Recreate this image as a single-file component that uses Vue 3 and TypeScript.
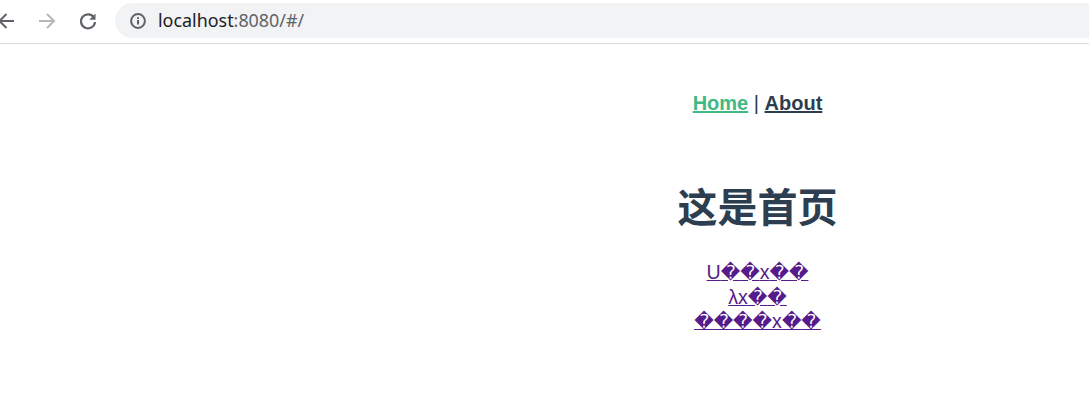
<script setup lang="ts">
const links: string[][] = [
  ['U', '�', '�', 'x', '�', '�'],
  ['λ', 'x', '�', '�'],
  ['�', '�', '�', '�', 'x', '�', '�'],
]
</script>

<template>
  <div class="page">
    <header class="toolbar">
      <button class="nav-btn back" aria-label="Back">
        <svg width="20" height="20" viewBox="0 0 20 20"><path d="M16 10H1.5M8.5 3 1.5 10l7 7" fill="none" stroke="#5f6368" stroke-width="2"/></svg>
      </button>
      <button class="nav-btn forward" aria-label="Forward">
        <svg width="20" height="20" viewBox="0 0 20 20"><path d="M2 10h15M10 3l7 7-7 7" fill="none" stroke="#b5b7ba" stroke-width="2"/></svg>
      </button>
      <button class="nav-btn reload" aria-label="Reload">
        <svg width="20" height="20" viewBox="0 0 20 20"><path d="M16.2 7A7 7 0 1 0 17 11" fill="none" stroke="#5f6368" stroke-width="2.2"/><path d="M17.5 2.5v6.2h-6.2z" fill="#5f6368"/></svg>
      </button>
      <div class="omnibox">
        <svg class="info" width="16" height="16" viewBox="0 0 16 16"><circle cx="8" cy="8" r="6.9" fill="none" stroke="#5f6368" stroke-width="2"/><path d="M8 7v4.6M8 4.2v1.7" stroke="#5f6368" stroke-width="2"/></svg>
        <span class="url"><span class="host">localhost</span>:8080/#/</span>
      </div>
    </header>
    <main class="content">
      <nav class="nav"><a class="active" href="#/">Home</a> | <a href="#/about">About</a></nav>
      <h1>这是首页</h1>
      <ul class="links">
        <li v-for="(link, i) in links" :key="i"><a href="#/"><span v-for="(ch, j) in link" :key="j" :class="{ bad: ch === '�' }">{{ ch }}</span></a></li>
      </ul>
    </main>
  </div>
</template>

<style>
html, body { overflow: hidden; background: #fff; }
</style>

<style scoped>
.page { width: 1089px; height: 407px; overflow: hidden; background: #fff; }
.toolbar {
  box-sizing: border-box;
  height: 44px;
  display: flex;
  align-items: flex-start;
  border-bottom: 1px solid #dadce0;
  padding: 3px 0 0;
}
.nav-btn {
  width: 20px; height: 20px; padding: 0; margin-top: 8px;
  border: 0; background: none; display: block; flex: none;
}
.back { margin-left: -2px; }
.forward { margin-left: 19px; }
.reload { margin-left: 21px; }
.omnibox {
  flex: none;
  width: 1000px;
  height: 35px;
  margin-left: 17px;
  border-radius: 18px;
  background: #f1f3f4;
  display: flex;
  align-items: center;
  padding-left: 15px;
  gap: 12px;
}
.url { font: 17.9px/24px "Noto Sans", "Open Sans", sans-serif; color: #5f6368; margin-top: -1px; }
.host { color: #202124; }
.content {
  width: 1515px;
  text-align: center;
  font-family: "Liberation Sans", Arial, "Noto Sans CJK SC", sans-serif;
  color: #2c3e50;
}
.nav { padding-top: 47px; font-size: 20px; line-height: 24px; }
.nav a { font-weight: 700; color: #2c3e50; }
.nav a.active { color: #42b983; }
h1 { margin: 70px 0 0; font-size: 40px; line-height: 46px; font-weight: 700; }
.links { list-style: none; margin: 29px 0 0; padding: 0; font-size: 19.6px; line-height: 24.6px; }
.links a { color: #551a8b; }
.bad { font-family: "DejaVu Sans", sans-serif; font-size: 19px; line-height: 1; }
</style>
